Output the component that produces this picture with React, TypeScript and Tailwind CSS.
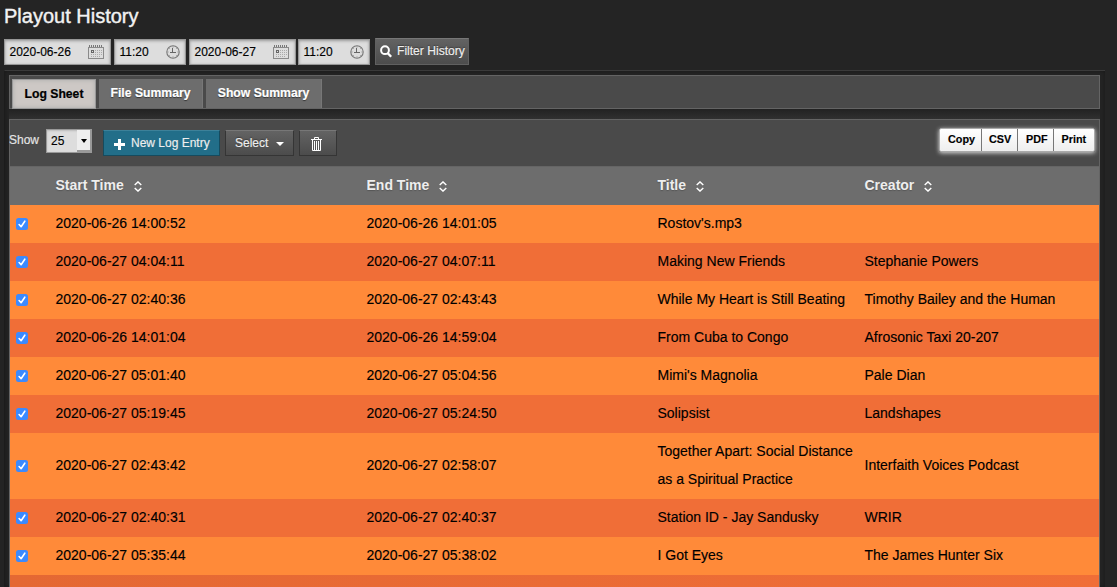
import type { ReactNode } from 'react';

const rows: [string, string, string, string][] = [
  ['2020-06-26 14:00:52', '2020-06-26 14:01:05', "Rostov's.mp3", ''],
  ['2020-06-27 04:04:11', '2020-06-27 04:07:11', 'Making New Friends', 'Stephanie Powers'],
  ['2020-06-27 02:40:36', '2020-06-27 02:43:43', 'While My Heart is Still Beating', 'Timothy Bailey and the Human'],
  ['2020-06-26 14:01:04', '2020-06-26 14:59:04', 'From Cuba to Congo', 'Afrosonic Taxi 20-207'],
  ['2020-06-27 05:01:40', '2020-06-27 05:04:56', "Mimi's Magnolia", 'Pale Dian'],
  ['2020-06-27 05:19:45', '2020-06-27 05:24:50', 'Solipsist', 'Landshapes'],
  ['2020-06-27 02:43:42', '2020-06-27 02:58:07', 'Together Apart: Social Distance as a Spiritual Practice', 'Interfaith Voices Podcast'],
  ['2020-06-27 02:40:31', '2020-06-27 02:40:37', 'Station ID - Jay Sandusky', 'WRIR'],
  ['2020-06-27 05:35:44', '2020-06-27 05:38:02', 'I Got Eyes', 'The James Hunter Six'],
];

const grid = 'grid grid-cols-[45.5px_311px_291px_207px_1fr] items-center';

function CalendarIcon() {
  return (
    <svg width="16" height="16" viewBox="0 0 16 16" fill="none" stroke="#8a8a8a" shapeRendering="crispEdges">
      <path d="M.5 3.5h15v11H.5z" />
      <path d="M1 2h14" stroke="#777" strokeDasharray="1 1" strokeWidth="2" />
      <path d="M3.5 6.5h2v2h-2z" stroke="#666" />
      <path d="M7 6.5h7M7 8.5h7M3 10.5h11M3 12.5h9" stroke="#aaa" strokeDasharray="1 1" />
    </svg>
  );
}

function ClockIcon() {
  return (
    <svg width="14" height="14" viewBox="0 0 14 14" fill="none" stroke="#777">
      <circle cx="7" cy="7" r="6.2" strokeWidth="1.1" />
      <path d="M6.5 3v5M4 7.5h6" stroke="#666" />
      <path d="M7 1.5v1M7 11.5v1M1.5 7h1M11.5 7h1M3 3l.6.6M11 3l-.6.6M3 11l.6-.6M11 11l-.6-.6" strokeWidth=".8" />
    </svg>
  );
}

function SortIcon() {
  return (
    <svg width="8" height="11" viewBox="0 0 8 11" fill="none" stroke="#fff" strokeWidth="1.4">
      <path d="M.7 4 4 .9 7.3 4M.7 7 4 10.1 7.3 7" />
    </svg>
  );
}

function Field({ value, date }: { value: string; date?: boolean }) {
  return (
    <div
      className={`flex h-[26px] items-center justify-between border border-[#979797] bg-[#dddddd] pl-[4.5px] text-[12px] text-black shadow-[inset_0_1px_3px_#999] ${
        date ? 'w-[107px] pr-[6px]' : 'w-[72px] pr-[5px]'
      }`}
    >
      <span>{value}</span>
      {date ? <CalendarIcon /> : <ClockIcon />}
    </div>
  );
}

function Button({ className, children }: { className: string; children: ReactNode }) {
  return (
    <button
      className={`flex items-center border bg-linear-to-b from-[#636363] to-[#4c4c4c] text-[12px] text-[#eeeeee] [text-shadow:0_-1px_1px_#2228] ${className}`}
    >
      {children}
    </button>
  );
}

function Tab({ label, className }: { label: string; className: string }) {
  return (
    <div className={`flex items-center justify-center text-[12.2px] font-bold [-webkit-text-stroke:0.2px] ${className}`}>
      <span className="whitespace-nowrap">{label}</span>
    </div>
  );
}

function Check() {
  return (
    <svg className="ml-[6px] mt-[2px]" width="12" height="12" viewBox="0 0 12 12">
      <rect width="12" height="12" rx="2.5" fill="#3b8aff" />
      <path d="M3.1 6.5 5.1 8.7 8.8 3.2" fill="none" stroke="#fff" strokeWidth="1.6" strokeLinecap="round" strokeLinejoin="round" />
    </svg>
  );
}

export default function App() {
  return (
    <div className="h-[587px] w-[1117px] overflow-hidden bg-[#242424] font-['Liberation_Sans',Arial,sans-serif]">
      <h1 className="h-[38px] pl-[4px] pt-[4px] text-[20px] leading-[24px] text-[#f2f2f2] [-webkit-text-stroke:0.4px]">Playout History</h1>
      <div className="flex h-[32px] items-start pl-[4px] [-webkit-text-stroke:0.15px]">
        <div className="mt-px flex">
          <Field value="2020-06-26" date />
          <div className="ml-[3px]"><Field value="11:20" /></div>
          <div className="ml-[3px]"><Field value="2020-06-27" date /></div>
          <div className="ml-[2px]"><Field value="11:20" /></div>
        </div>
        <Button className="ml-[5px] h-[27px] w-[94px] gap-[5px] border-[#606060] border-t-[#777] pb-px pl-[4px]">
          <svg width="12" height="13" viewBox="0 0 12 13" fill="none" stroke="#fff" strokeWidth="2">
            <circle cx="5" cy="5.2" r="3.9" />
            <path d="m7.8 8.2 3.4 3.6" strokeWidth="2.4" />
          </svg>
          <span className="whitespace-nowrap text-[12.1px]">Filter History</span>
        </Button>
      </div>
      <div className="ml-[4px] h-[517px] w-[1101px] border-l border-t border-[#3a3a3a] border-l-[#1c1c1c] bg-[#252525] pl-[4px] pt-[4px] shadow-[inset_0_0_5px_#181818]">
        <div className="flex h-[34px] w-[1091px] border border-[#646464] bg-[#4a4a4a] pl-[2px] pt-[3px]">
          <Tab label="Log Sheet" className="h-[30px] w-[84px] border border-[#999] bg-[#cdc8c5] text-black shadow-[inset_0_0_4px_#aaa]" />
          <Tab label="File Summary" className="ml-[3px] h-[29px] w-[104px] border-r border-[#777] bg-[#6d6d6d] text-white [text-shadow:0_1px_1px_#333]" />
          <Tab label="Show Summary" className="ml-[3px] h-[29px] w-[116px] border-r border-[#777] bg-[#6d6d6d] text-white [text-shadow:0_1px_1px_#333]" />
        </div>
        <div className="h-[10px] w-[1091px] bg-linear-to-b from-[#222] to-[#303030]" />
        <div className="w-[1091px] border border-b-0 border-[#646464] bg-[#4a4a4a]">
          <div className="flex h-[46px] items-start [-webkit-text-stroke:0.15px]">
            <span className="-ml-px mt-[12px] w-[36px] text-[12px] leading-[16px] text-[#e6e6e6]">Show</span>
            <div className="ml-px mt-[9px] flex h-[24px] w-[46px] items-stretch border border-[#999] bg-[#dddddd] text-[12px] text-black shadow-[inset_0_1px_2px_#bbb]">
              <span className="w-[30px] pl-[4px] leading-[22px]">25</span>
              <span className="flex flex-1 items-center justify-center border-b-2 border-r border-[#999] bg-[#eeeeee] pt-[2px]">
                <svg width="6" height="4" viewBox="0 0 6 4"><path d="M0 0h6L3 4z" /></svg>
              </span>
            </div>
            <button className="ml-[11px] mt-[10px] flex h-[26px] w-[117px] items-center border border-[#164b5e] border-t-[#3d8199] bg-[#226e89] pl-[10px] text-[12px] text-[#eeeeee]">
              <svg className="mt-[3px]" width="11" height="11" viewBox="0 0 11 11"><path d="M4 0h3v4h4v3H7v4H4V7H0V4h4z" fill="#fff" /></svg>
              <span className="ml-[6px] whitespace-nowrap">New Log Entry</span>
            </button>
            <Button className="ml-[5px] mt-[10px] h-[26px] w-[69px] border-[#353535] border-t-[#777] pl-[9px]">
              <span>Select</span>
              <svg className="ml-[8px] mt-[2px]" width="8" height="4" viewBox="0 0 8 4"><path d="M0 0h8L4 4z" fill="#fff" /></svg>
            </Button>
            <Button className="ml-[5px] mt-[10px] h-[26px] w-[38px] border-[#353535] border-t-[#777] pl-[11px]">
              <svg className="mt-px" width="11" height="14" viewBox="0 0 11 14" fill="none" stroke="#fff">
                <path d="M3.5 2V.5h4V2M0 2.5h11" />
                <path d="M1.5 3v10.5h8V3M3.5 4v9M5.5 4v9M7.5 4v9" />
              </svg>
            </Button>
            <div className="ml-auto mr-[4px] mt-[8px] flex h-[24px] rounded-[2px] border border-[#aaa] bg-linear-to-b from-white to-[#eeeeee] text-[10.8px] font-bold leading-[21px] text-black shadow-[0_1px_4px_#ddd]">
              <span className="w-[42px] border-r border-[#777] pl-[8px]">Copy</span>
              <span className="w-[36px] border-r border-[#777] pl-[7px]">CSV</span>
              <span className="w-[36px] border-r border-[#777] pl-[8px]">PDF</span>
              <span className="w-[40px] pl-[7.5px]">Print</span>
            </div>
          </div>
          <div className={`${grid} h-[39px] border-t border-[#656565] bg-[#6d6d6d] pb-px text-[14px] font-bold text-[#eeeeee] [text-shadow:0_1px_1px_#4448]`}>
            <span />
            {['Start Time', 'End Time', 'Title', 'Creator'].map((label) => (
              <span key={label} className="flex items-center gap-[10px]">
                {label}
                <span className="mt-px"><SortIcon /></span>
              </span>
            ))}
          </div>
          {rows.map(([start, end, title, creator], i) => (
            <div
              key={start}
              className={`${grid} pb-[6px] pt-[4px] text-[14px] leading-[28px] text-black [-webkit-text-stroke:0.15px] ${i % 2 ? 'bg-[#f06e37]' : 'bg-[#ff8a39]'}`}
            >
              <Check />
              <span>{start}</span>
              <span>{end}</span>
              <span className="pr-[8px]">{title}</span>
              <span>{creator}</span>
            </div>
          ))}
          <div className="h-[38px] bg-linear-to-r from-[#e46833] to-[#f06e37]" />
        </div>
      </div>
    </div>
  );
}
